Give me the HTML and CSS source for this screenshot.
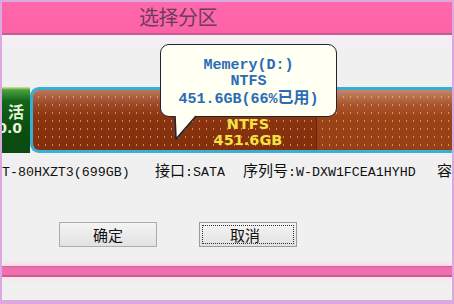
FILE: index.html
```html
<!DOCTYPE html>
<html>
<head>
<meta charset="utf-8">
<link rel="stylesheet" href="styles.css">
</head>
<body>
<div class="frame">
  <div class="titlebar"><span class="title">选择分区</span></div>
  <div class="content">
    <div class="disk">
      <div class="seg-green">
        <div class="gline g1">活</div>
        <div class="gline g2">0.0</div>
      </div>
      <div class="seg-brown">
        <div class="part part-a"><div class="ptext">NTFS<br>451.6GB</div></div>
        <div class="part part-b"></div>
      </div>
    </div>
    <div class="info">
      <span class="col c1">T-80HXZT3(699GB)</span><span class="col c2"><span class="cj">接口</span>:SATA</span><span class="col c3"><span class="cj">序列号</span>:W-DXW1FCEA1HYHD</span><span class="cj">容</span>
    </div>
    <div class="buttons">
      <button class="btn">确定</button>
      <button class="btn focus"><span class="ring">取消</span></button>
    </div>
    <div class="pinkbar"></div>
    <div class="tooltip">
      <div class="tline">Memery(D:)</div>
      <div class="tline">NTFS</div>
      <div class="tline">451.6GB(66%<span class="tcj">已用</span>)</div>
    </div>
    <svg class="tail" width="32" height="26" viewBox="0 0 32 26">
      <path d="M5 0 L6 23 L26 0" fill="#fffff2" stroke="#1c2634" stroke-width="1.6" stroke-linejoin="round"/>
    </svg>
  </div>
</div>
</body>
</html>
```
FILE: styles.css
```css
html, body {
  margin: 0;
  padding: 0;
  background: #f0f0f0;
}
.frame {
  width: 454px;
  height: 304px;
  box-sizing: border-box;
  border: 2px solid #dca8e0;
  border-bottom-width: 4px;
  background: #f0f0f0;
  display: flex;
  flex-direction: column;
  overflow: hidden;
}
.titlebar {
  height: 31px;
  flex: none;
  background: linear-gradient(to bottom, #ff68ac, #fd62a6);
  border-bottom: 2px solid #c45c94;
  padding-left: 137px;
  box-sizing: content-box;
  font-family: "Noto Sans CJK SC", sans-serif;
  font-size: 20px;
  line-height: 30px;
  color: #6a3c5c;
}
.title {
  letter-spacing: -0.5px;
}
.content {
  position: relative;
  flex: 1;
  display: flex;
  flex-direction: column;
  background: linear-gradient(to bottom, #f6eef6 0px, #f0f0f0 20px);
}
.disk {
  margin-top: 52px;
  height: 66px;
  display: flex;
  flex: none;
}
.seg-green {
  width: 28px;
  flex: none;
  background: linear-gradient(to bottom, #d8e89a 0px, #4aa03c 3px, #14661c 14px, #0a4f10 60%, #0c4a12 100%);
  display: flex;
  flex-direction: column;
  align-items: flex-end;
  padding-top: 16px;
  box-sizing: border-box;
  overflow: hidden;
  font-family: "Noto Sans CJK SC", sans-serif;
  font-weight: bold;
  color: #e8f4d8;
}
.gline {
  white-space: nowrap;
  flex: none;
}
.g1 {
  font-size: 16px;
  line-height: 17px;
  height: 17px;
  margin-right: 6px;
}
.g2 {
  font-family: "DejaVu Sans", sans-serif;
  font-size: 14px;
  line-height: 17px;
  height: 17px;
  margin-right: 8px;
}
.seg-brown {
  flex: 1;
  display: flex;
  border: 3px solid #38aed2;
  border-right: none;
  border-radius: 9px 0 0 9px;
  box-shadow: inset 0 0 0 1px #7ed4ea;
  overflow: hidden;
  margin-right: -4px;
}
.part {
  height: 100%;
  background-image:
    radial-gradient(circle, rgba(255, 214, 130, 0.55) 0.7px, transparent 1.1px),
    linear-gradient(to bottom, #b8785a 0%, #9a4624 25%, #8a3410 45%, #832e0c 100%);
  background-size: 7px 8px, 100% 100%;
  background-position: 2px 3px, 0 0;
}
.part-a {
  width: 284px;
  flex: none;
  box-sizing: border-box;
  padding-left: 147px;
  padding-top: 26px;
  border-right: 1px solid #6a2408;
}
.part-b {
  flex: 1;
  background-image:
    radial-gradient(circle, rgba(255, 214, 130, 0.55) 0.7px, transparent 1.1px),
    linear-gradient(to bottom, #c4866a 0%, #a8542c 25%, #9c4418 45%, #963e14 100%);
}
.ptext {
  text-align: center;
  font-family: "DejaVu Sans", sans-serif;
  font-weight: bold;
  font-size: 14.5px;
  line-height: 16px;
  color: #f2e244;
}
.info {
  margin-top: 7px;
  height: 20px;
  white-space: nowrap;
  overflow: hidden;
  font-family: "Liberation Mono", "Noto Sans CJK SC", monospace;
  font-size: 13.3px;
  line-height: 20px;
  color: #101010;
  display: flex;
  align-items: baseline;
}
.col {
  display: inline-block;
  flex: none;
}
.c1 { width: 153px; }
.c2 { width: 88px; }
.c3 { width: 194px; }
.cj {
  font-family: "Noto Sans CJK SC", sans-serif;
  font-size: 15px;
  line-height: 20px;
}
.buttons {
  margin-top: 42px;
  padding-left: 57px;
  display: flex;
  gap: 42px;
  flex: none;
}
.btn {
  width: 98px;
  height: 25px;
  margin: 0;
  padding: 0;
  border: 1px solid #acacac;
  border-radius: 0;
  background: linear-gradient(to bottom, #f4f4f4, #e2e2e2);
  font-family: "Noto Sans CJK SC", sans-serif;
  font-size: 15px;
  line-height: 21px;
  color: #111;
  display: flex;
  align-items: center;
  justify-content: center;
}
.focus {
  padding: 2px;
  border-color: #9a9a9a;
}
.ring {
  flex: 1;
  align-self: stretch;
  border: 1px dotted #303030;
  text-align: center;
  line-height: 17px;
  padding-right: 6px;
}
.pinkbar {
  margin-top: 19px;
  height: 8px;
  flex: none;
  background: #f26cb0;
  border-top: 1px solid #c8689a;
  border-bottom: 2px solid #c4608e;
  box-shadow: 0 -3px 4px #ffd6ea, 0 3px 4px #ffe0f0;
}
.tooltip {
  position: absolute;
  left: 158px;
  top: 9px;
  width: 177px;
  height: 73px;
  box-sizing: border-box;
  border: 1.6px solid #1c2634;
  border-radius: 9px;
  background: #fffff2;
  padding-top: 13px;
  text-align: center;
  font-family: "Liberation Mono", monospace;
  font-weight: bold;
  font-size: 15px;
  line-height: 15.5px;
  color: #2a6cb6;
}
.tcj {
  font-family: "Noto Sans CJK SC", sans-serif;
  font-weight: bold;
  font-size: 16px;
}
.tail {
  position: absolute;
  left: 168px;
  top: 81px;
  overflow: visible;
}
```
